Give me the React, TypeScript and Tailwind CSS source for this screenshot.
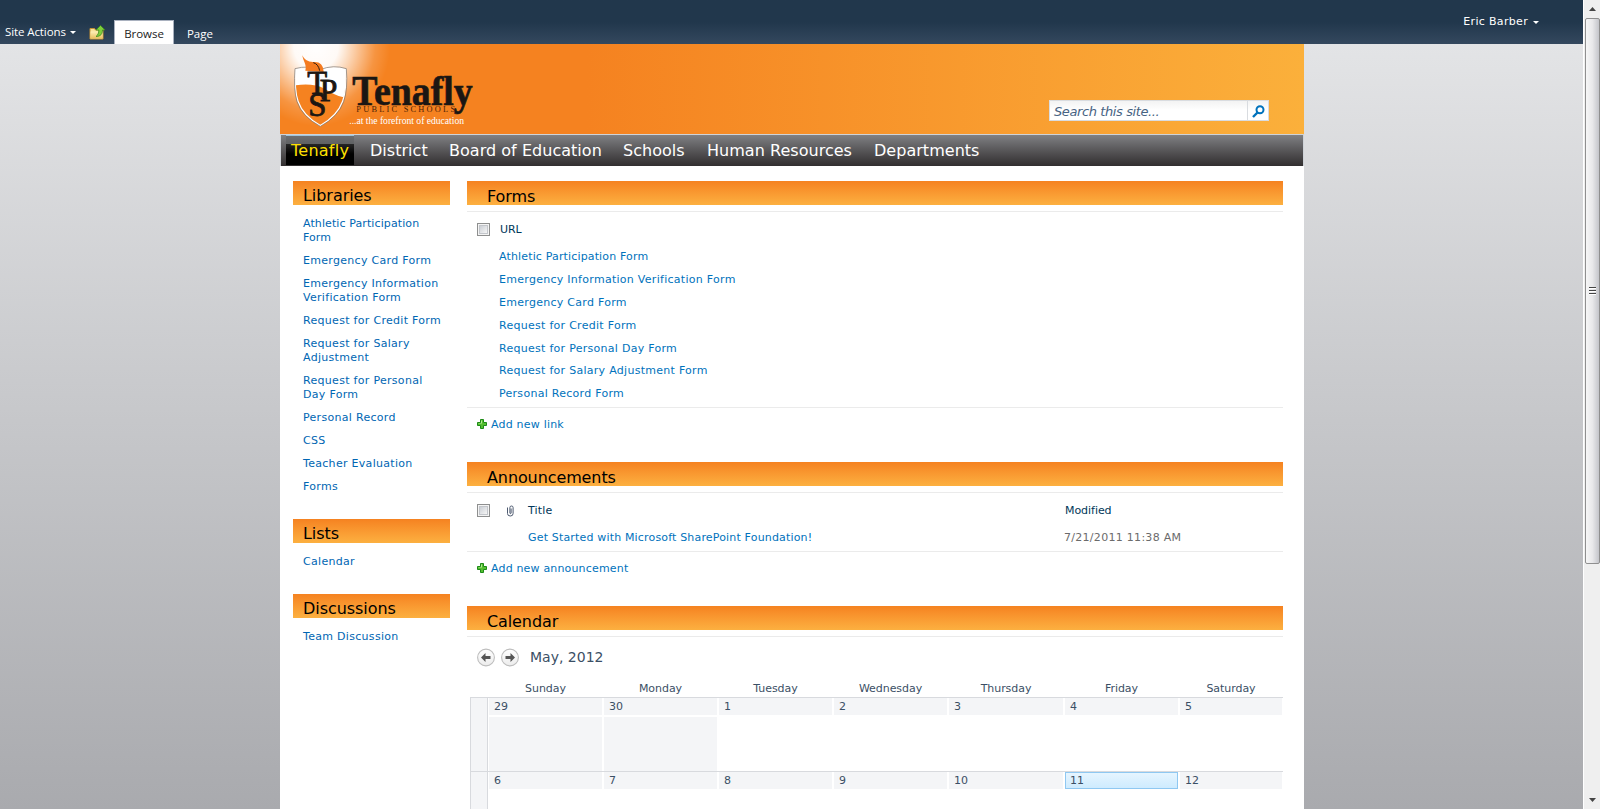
import React from "react";

const heading = "bg-linear-to-b from-[#f58220] to-[#fcb040] h-6 text-[16px] leading-[24px] text-black";
const link = "text-[#0072bc]";

function Caret() {
  return (
    <svg width="6" height="3" viewBox="0 0 6 3" className="shrink-0">
      <path d="M0 0h6L3 3z" fill="#fff" />
    </svg>
  );
}

function FolderUp() {
  return (
    <svg width="17" height="15" viewBox="0 0 17 15" className="shrink-0">
      <defs>
        <linearGradient id="folder" x1="0" y1="0" x2="0" y2="1">
          <stop offset="0" stopColor="#fdf0b8" />
          <stop offset="1" stopColor="#e9bf5e" />
        </linearGradient>
      </defs>
      <path d="M1 3.500h4.500l1 1.500H14v9H1z" fill="#f8e29a" stroke="#c08f35" />
      <path d="M1.500 6.500h12v7h-12z" fill="url(#folder)" />
      <path d="M11.500 0.500l4.500 4.500h-2.500c0 4-2 6.500-6.500 6.500 2-1.500 2.800-3.500 2.800-6.500H7z" fill="#7fce3b" stroke="#3d8c1f" strokeWidth=".8" />
    </svg>
  );
}

function Plus() {
  return (
    <svg width="10" height="10" viewBox="0 0 10 10" className="-mt-[2px] shrink-0">
      <path d="M3.500 .5h3v3h3v3h-3v3h-3v-3h-3v-3h3z" fill="#55bf30" stroke="#1c8a17" />
      <path d="M4 1.500h1v3H1.500v-.5H4z" fill="#b5ec93" />
    </svg>
  );
}

function Check() {
  return (
    <span className="block size-[13px] shrink-0 border border-[#8e8f8f] bg-[#f4f4f4] p-px">
      <span className="block size-full border border-[#c3c6cb] bg-linear-to-br from-[#cbcfd5] to-[#f6f6f6]" />
    </span>
  );
}

function Clip() {
  return (
    <svg width="9" height="12" viewBox="0 0 9 12" className="shrink-0">
      <path d="M1.500 2.500v6a2.800 2.500 0 0 0 5.600 0V2.500a1.600 1.500 0 0 0-3.200 0V8a.6.6 0 0 0 1.200 0V3.500" fill="none" stroke="#4d5a70" strokeWidth="1" />
    </svg>
  );
}

function Arrow({ right }: { right?: boolean }) {
  return (
    <svg width="18" height="19" viewBox="0 0 18 19" className={right ? "-scale-x-100" : ""}>
      <defs>
        <linearGradient id="disc" x1="0" y1="0" x2="0" y2="1">
          <stop offset="0" stopColor="#fff" />
          <stop offset="1" stopColor="#ececec" />
        </linearGradient>
      </defs>
      <circle cx="9" cy="9.500" r="8.400" fill="url(#disc)" stroke="#bdbdbd" strokeWidth="1.100" />
      <path d="M4 9.500L8.500 5v3H13.500v3H8.500v3z" fill="#555" />
    </svg>
  );
}

function Logo() {
  return (
    <svg width="260" height="90" viewBox="30 24 780 270" className="block" fontFamily="'Liberation Serif', serif">
      <path d="M77 100Q115 90 150 104Q190 88 227 100Q231 160 218 196Q202 240 151 269Q99 240 84 196Q72 160 77 100Z" fill="#f58220" />
      <path d="M77 100Q115 90 150 104Q190 88 227 100Q229 150 221 184Q190 176 164 158Q128 140 77 148Z" fill="#fff" />
      <path d="M77 100Q115 90 150 104Q190 88 227 100Q231 160 218 196Q202 240 151 269Q99 240 84 196Q72 160 77 100Z" fill="none" stroke="#fff" strokeWidth="4" />
      <path d="M75 98Q115 87 150 101Q190 85 229 98Q234 160 221 197Q204 243 151 271Q97 243 81 197Q70 160 75 98Z" fill="none" stroke="#77716d" strokeWidth="2" />
      <path d="M106 104C111 84 99 76 97 58C105 76 120 78 134 78C151 78 160 88 161 108Z" fill="#f47b20" />
      <path d="M130 80Q145 84 149 104" fill="none" stroke="#2a1a10" strokeWidth="3" />
      <g fill="#1b1613" stroke="#1b1613" strokeWidth="2.500">
        <text x="112" y="174" fontSize="98">T</text>
        <text x="149" y="194" fontSize="95">P</text>
        <text x="115" y="239" fontSize="98">S</text>
      </g>
      <text x="247" y="206" fontSize="128" fontWeight="bold" fill="#1b1613" stroke="#1b1613" strokeWidth="2" textLength="361" lengthAdjust="spacingAndGlyphs">Tenafly</text>
      <text x="259" y="229" fontSize="25" fill="#4a1f08" textLength="296" lengthAdjust="spacing">PUBLIC SCHOOLS</text>
      <text x="238" y="265" fontSize="31" fill="#fff" textLength="344" lengthAdjust="spacingAndGlyphs">...at the forefront of education</text>
    </svg>
  );
}

function SideGroup({ title, items }: { title: string; items: string[] }) {
  return (
    <section>
      <h2 className={heading + " pl-[10px] pt-[3px] tracking-[-0.05px]"}>{title}</h2>
      <ul className="flex flex-col gap-[9px] pl-[10px] pt-[12px] pb-[25px] text-[#0066b3]">
        {items.map((t) => (
          <li key={t} className={"whitespace-pre-line leading-[14px] " + (t.startsWith("Athletic") ? "tracking-[0.1px]" : "tracking-[0.3px]")}>{t}</li>
        ))}
      </ul>
    </section>
  );
}

function MainHeading({ children }: { children: string }) {
  return (
    <>
      <h2 className={heading + " pl-5 pt-[4px] tracking-[-0.1px]"}>{children}</h2>
      <div className="mt-1.5 h-px bg-[#ebebeb]" />
    </>
  );
}

const nav: [string, string][] = [
  ["District", "w-[79px]"],
  ["Board of Education", "w-[174px]"],
  ["Schools", "w-[84px]"],
  ["Human Resources", "w-[167px]"],
  ["Departments", "w-[130px]"],
];
const forms = [
  "Athletic Participation Form",
  "Emergency Information Verification Form",
  "Emergency Card Form",
  "Request for Credit Form",
  "Request for Personal Day Form",
  "Request for Salary Adjustment Form",
  "Personal Record Form",
];
const days = ["Sunday", "Monday", "Tuesday", "Wednesday", "Thursday", "Friday", "Saturday"];
const weeks = [
  ["29", "30", "1", "2", "3", "4", "5"],
  ["6", "7", "8", "9", "10", "11", "12"],
];
const calGrid = "grid grid-cols-[18px_115px_115px_115px_115px_116px_115px_104px]";

export default function App() {
  return (
    <div className="flex h-[809px] w-[1600px] overflow-hidden font-['DejaVu_Sans',sans-serif] text-[11px] tracking-[-0.05px]">
      <div className="flex w-[1583px] flex-col">
        <header className="flex h-11 shrink-0 items-end bg-linear-to-b from-[#21374c] from-50% to-[#34485e] text-white">
          <div className="flex h-6 items-center pl-[5px] font-['Open_Sans',sans-serif] text-[11.500px] tracking-[-0.1px]">
            <span className="w-[60px] whitespace-nowrap">Site Actions</span>
            <span className="ml-[5px]"><Caret /></span>
            <span className="ml-[13px]"><FolderUp /></span>
          </div>
          <div className="ml-[8px] flex h-6 w-[60px] items-center justify-center border border-b-0 border-[#a9b1bf] bg-white pt-[3px] font-['Open_Sans',sans-serif] text-[11.500px] text-[#222]">Browse</div>
          <div className="flex h-6 items-center pl-[13px] pt-[4px] font-['Open_Sans',sans-serif] text-[11.500px]">Page</div>
          <div className="ml-auto mr-[44px] flex h-11 items-center gap-[5px]">
            <span className="tracking-[0.32px]">Eric Barber</span>
            <Caret />
          </div>
        </header>

        <div className="flex min-h-0 flex-1 justify-center bg-linear-to-b from-[#e3e4e6] to-[#a9aaae] pr-px">
          <main className="ml-[2px] w-[1024px] overflow-hidden bg-white">
            <div className="flex h-[90px] items-start justify-between bg-[radial-gradient(ellipse_74px_80px_at_36px_2px,#fff_0%,rgba(255,255,255,0.96)_30%,rgba(255,255,255,0.5)_58%,rgba(255,255,255,0.15)_80%,rgba(255,255,255,0)_100%),linear-gradient(to_right,#f58220_0%,#f58220_30%,#fbb03b_100%)]">
              <Logo />
              <div className="mr-[35px] mt-14 flex h-[21px] w-[220px] border border-[#d9dce0] bg-linear-to-b from-[#f3f3f3] to-white to-50%">
                <span className="flex-1 pl-1 text-[13px] italic leading-[21px] tracking-[-0.4px] text-[#476382]">Search this site...</span>
                <span className="flex w-[21px] items-center justify-center border-l border-[#d9dce0]">
                  <svg width="13" height="13" viewBox="0 0 13 13" className="mt-px">
                    <circle cx="8" cy="4.800" r="3.500" fill="none" stroke="#0072bc" strokeWidth="2" />
                    <path d="M5.500 7.500L1 12" stroke="#0072bc" strokeWidth="2.400" />
                  </svg>
                </span>
              </div>
            </div>

            <nav className="flex h-8 border-x border-t border-[#cfd3d8] bg-linear-to-b from-[#808184] to-[#322f30] text-[16px] leading-[32px] tracking-[0.03px] text-white">
              <span className="ml-[5px] h-[30px] w-[68px] border-t border-[#9fc4da] bg-[linear-gradient(to_bottom,#6d6e70_0px,#5f6163_8px,#262626_8px,#000_18px)] pl-[5px] leading-[30px] tracking-[0.25px] text-[#ffe000]">Tenafly</span>
              <div className="flex pl-4">
                {nav.map(([t, w]) => (
                  <span key={t} className={"whitespace-nowrap " + w}>{t}</span>
                ))}
              </div>
            </nav>

            <div className="flex pl-[13px] pt-[15px]">
              <aside className="w-[157px]">
                <SideGroup
                  title="Libraries"
                  items={[
                    "Athletic Participation\nForm",
                    "Emergency Card Form",
                    "Emergency Information\nVerification Form",
                    "Request for Credit Form",
                    "Request for Salary\nAdjustment",
                    "Request for Personal\nDay Form",
                    "Personal Record",
                    "CSS",
                    "Teacher Evaluation",
                    "Forms",
                  ]}
                />
                <SideGroup title="Lists" items={["Calendar"]} />
                <SideGroup title="Discussions" items={["Team Discussion"]} />
              </aside>

              <div className="ml-[17px] w-[816px]">
                <section className="h-[281px]">
                  <MainHeading>Forms</MainHeading>
                  <div className="flex h-[33px] items-center gap-[10px] pl-[10px] pt-[2px] text-[#003759]">
                    <Check />
                    <span className="pt-px">URL</span>
                  </div>
                  <ul className={"h-[163px] border-b border-[#ebebeb] pl-8 pt-[0.4px] " + link}>
                    {forms.map((t) => (
                      <li key={t} className={"h-[22.800px] leading-[23px] " + (t.startsWith("Athletic") ? "tracking-[0.15px]" : "tracking-[0.28px]")}>{t}</li>
                    ))}
                  </ul>
                  <div className={"flex h-[33px] items-center gap-1 pl-[10px] tracking-[0.2px] " + link}>
                    <Plus />
                    <span className="pt-px">Add new link</span>
                  </div>
                </section>

                <section className="h-36">
                  <MainHeading>Announcements</MainHeading>
                  <div className="flex h-[33px] items-center pl-[10px] pt-[2px] text-[#003759]">
                    <Check />
                    <span className="ml-4"><Clip /></span>
                    <span className="ml-[13px] w-[537px] pt-px tracking-[0.15px]">Title</span>
                    <span className="pt-px">Modified</span>
                  </div>
                  <div className="flex h-[26px] border-b border-[#ebebeb] pl-[61px] leading-[23px]">
                    <span className={"w-[536px] tracking-[0.17px] " + link}>Get Started with Microsoft SharePoint Foundation!</span>
                    <span className="tracking-[0.29px] text-[#6b6b6b]">7/21/2011 11:38 AM</span>
                  </div>
                  <div className={"flex h-[33px] items-center gap-1 pl-[10px] tracking-[0.17px] " + link}>
                    <Plus />
                    <span className="pt-px">Add new announcement</span>
                  </div>
                </section>

                <section className="text-[#3b4f65]">
                  <MainHeading>Calendar</MainHeading>
                  <div className="flex h-[40px] items-center gap-1.5 pl-[10px]">
                    <Arrow />
                    <Arrow right />
                    <span className="ml-[5px] text-[14px] tracking-[0]">May, 2012</span>
                  </div>
                  <div className={"ml-[3px] h-[20px] pt-px leading-[21px] text-center " + calGrid}>
                    <span />
                    {days.map((d) => <span key={d}>{d}</span>)}
                  </div>
                  {weeks.map((w, i) => (
                    <div key={i} className={"ml-[3px] h-[74px] border-t border-[#d8dade] " + calGrid}>
                      <span className="border-x border-[#d8dade] bg-[#f4f5f7]" />
                      {w.map((d) => (
                        <div key={d} className="mx-px flex flex-col gap-0.5">
                          <span className={"h-[17px] " + (d === "11" ? "border border-[#8fc8f2] bg-linear-to-b from-[#e6f5ff] to-[#ceebfe] pl-1 leading-[15px]" : "bg-[#f4f5f7] pl-[5px] leading-[17px]")}>{d}</span>
                          {i === 0 && Number(d) > 20 && <span className="flex-1 bg-[#f4f5f7]" />}
                        </div>
                      ))}
                    </div>
                  ))}
                </section>
              </div>
            </div>
          </main>
        </div>
      </div>

      <div className="flex w-[17px] flex-col items-center border-l border-white bg-[#efefef]">
        <div className="flex h-[18px] items-center">
          <svg width="7" height="4" viewBox="0 0 7 4"><path d="M3.500 0L7 4H0z" fill="#444" /></svg>
        </div>
        <div className="flex h-[546px] w-[15px] flex-col items-center justify-center gap-px rounded-xs border border-[#8f8f8f] bg-linear-to-r from-[#f7f7f7] via-[#e8e8ea] via-50% to-[#c4c5ca]">
          {[0, 1, 2].map((n) => (
            <span key={n} className="h-[2px] w-[7px] border-t border-[#444] bg-white" />
          ))}
        </div>
        <div className="mt-auto flex h-[18px] items-center">
          <svg width="7" height="4" viewBox="0 0 7 4"><path d="M3.500 4L7 0H0z" fill="#444" /></svg>
        </div>
      </div>
    </div>
  );
}
